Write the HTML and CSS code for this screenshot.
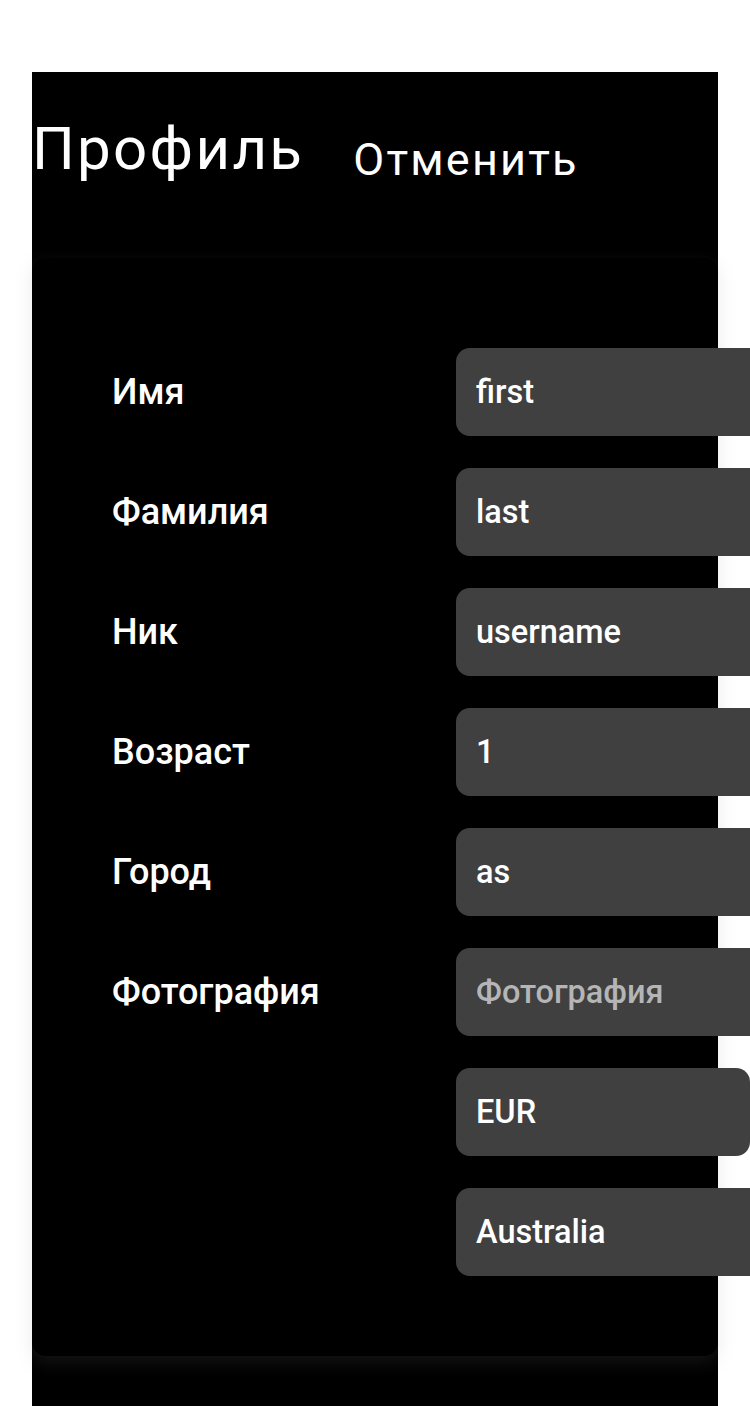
FILE: index.html
```html
<!DOCTYPE html>
<html lang="ru">
<head>
<meta charset="utf-8">
<title>Профиль</title>
<link rel="stylesheet" href="styles.css">
</head>
<body>
<div class="panel">
  <header class="head">
    <h1 class="title">Профиль</h1>
    <button class="cancel" type="button">Отменить</button>
  </header>
  <section class="card">
    <div class="grid">
      <label class="label">Имя</label>
      <div class="field"><span class="value">first</span></div>
      <label class="label">Фамилия</label>
      <div class="field"><span class="value">last</span></div>
      <label class="label">Ник</label>
      <div class="field"><span class="value">username</span></div>
      <label class="label">Возраст</label>
      <div class="field"><span class="value">1</span></div>
      <label class="label">Город</label>
      <div class="field"><span class="value">as</span></div>
      <label class="label">Фотография</label>
      <div class="field"><span class="placeholder">Фотография</span></div>
      <span class="label"></span>
      <div class="field select"><span class="value">EUR</span></div>
      <span class="label"></span>
      <div class="field"><span class="value">Australia</span></div>
    </div>
  </section>
</div>
</body>
</html>
```

FILE: styles.css
```css
html, body {
  margin: 0;
  padding: 0;
  background: #ffffff;
  overflow-x: hidden;
}
body {
  font-family: Roboto, "Noto Sans", sans-serif;
  color: #ffffff;
  padding: 72px 32px 0 32px;
}
.panel {
  background: #000000;
  width: 686px;
  padding-bottom: 60px;
}
.head {
  display: flex;
  align-items: flex-start;
  padding-top: 42px;
}
.title {
  margin: 0;
  font-size: 60px;
  line-height: 70px;
  font-weight: 400;
  letter-spacing: 2.3px;
}
.cancel {
  margin: 20px 0 0 49px;
  padding: 0;
  background: none;
  border: 0;
  color: #ffffff;
  font-family: Roboto, "Noto Sans", sans-serif;
  font-size: 45px;
  line-height: 52px;
  font-weight: 400;
  letter-spacing: 2.2px;
}
.card {
  margin-top: 72px;
  background: #000000;
  border-radius: 14px;
  box-shadow: 0 6px 18px rgba(128, 128, 128, 0.16);
  padding: 90px 0 80px 80px;
}
.grid {
  display: grid;
  grid-template-columns: 344px 294px;
  row-gap: 32px;
  align-items: center;
}
.label {
  font-size: 36px;
  font-weight: 500;
}
.field {
  height: 88px;
  width: 420px;
  box-sizing: border-box;
  background: #404040;
  border-radius: 14px;
  padding-left: 20px;
  display: flex;
  align-items: center;
  font-size: 32.5px;
  font-weight: 500;
}
.field.select {
  width: 294px;
}
.placeholder {
  color: #b5b5b5;
}
```
